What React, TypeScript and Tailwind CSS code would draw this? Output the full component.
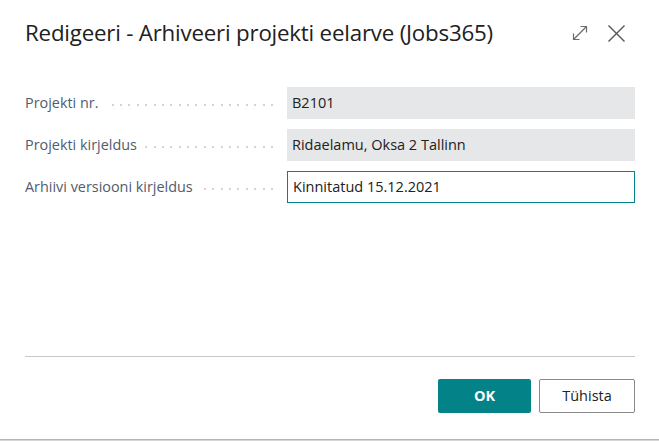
import React from "react";

const rows = [
  { label: "Projekti nr.", value: "B2101", editable: false },
  { label: "Projekti kirjeldus", value: "Ridaelamu, Oksa 2 Tallinn", editable: false },
  { label: "Arhiivi versiooni kirjeldus", value: "Kinnitatud 15.12.2021", editable: true },
];

const dots = Array.from({ length: 30 }, (_, i) => i);

export default function App() {
  return (
    <div
      className="w-[659px] h-[441px] bg-white flex flex-col overflow-hidden"
      style={{ fontFamily: '"Open Sans", "Noto Sans", sans-serif' }}
    >
      <div className="h-[66px] flex items-center justify-between pl-[25px] pr-[33px]">
        <div className="text-[22.3px] text-[#212121] tracking-[-0.2px]">
          Redigeeri - Arhiveeri projekti eelarve (Jobs365)
        </div>
        <div className="flex items-center gap-[18px]">
          <svg width="18" height="18" viewBox="0 0 18 18" fill="none" stroke="#6b6b6b" strokeWidth="1.2">
            <path d="M2.5 15.5 L15.5 2.5" />
            <path d="M9.5 2.5 H15.5 V8.5" />
            <path d="M2.5 9.5 V15.5 H8.5" />
          </svg>
          <svg width="19" height="19" viewBox="0 0 19 19" fill="none" stroke="#5a5a5a" strokeWidth="1.5">
            <path d="M1.5 1.5 L17.5 17.5" />
            <path d="M17.5 1.5 L1.5 17.5" />
          </svg>
        </div>
      </div>

      <div className="flex flex-col gap-[10px] pt-[21px] pl-[25px] pr-[24px]">
        {rows.map((r) => (
          <div key={r.label} className="flex items-center h-[32px]">
            <div className="w-[262px] flex items-center h-full pr-[14px]">
              <span className="text-[14.4px] text-[#505c6d] whitespace-nowrap">{r.label}</span>
              <span className="flex-1 min-w-0 ml-[8px] mt-[3px] flex justify-end items-center gap-[6.4px] overflow-hidden">
                {dots.map((d) => (
                  <span key={d} className="shrink-0 w-[2px] h-[2px] rounded-full bg-[#c4c4c4]" />
                ))}
              </span>
            </div>
            <div
              className={
                "flex-1 h-full flex items-center pl-[5px] text-[14.5px] text-[#212121] " +
                (r.editable ? "border border-[#00848a] bg-white" : "bg-[#e6e7e8]")
              }
            >
              {r.value}
            </div>
          </div>
        ))}
      </div>

      <div className="flex-1" />

      <div className="ml-[25px] mr-[24px] border-t border-[#c8c8c8]" />

      <div className="flex justify-end gap-[8px] pr-[24px] mt-[22px]">
        <button className="w-[93px] h-[34px] rounded-[2px] bg-[#038387] text-white text-[14.5px] font-bold">
          OK
        </button>
        <button className="w-[96px] h-[34px] rounded-[2px] border border-[#8a8a8a] bg-white text-[#212121] text-[14.5px]">
          Tühista
        </button>
      </div>

      <div className="h-[26px]" />
      <div className="h-[1px] bg-[#b4b4b4]" />
      <div className="h-[1px] bg-[#d6d6d6]" />
    </div>
  );
}
